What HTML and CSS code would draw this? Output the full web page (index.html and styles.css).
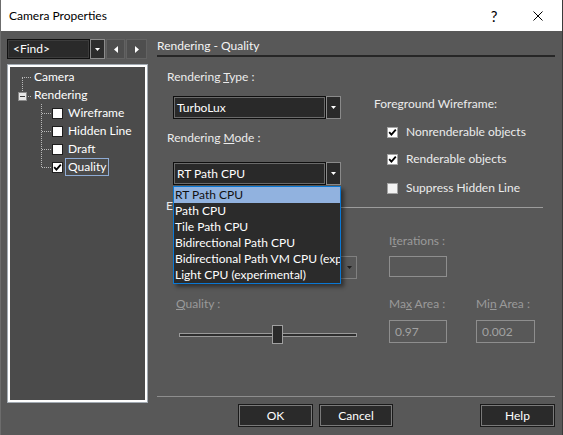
FILE: index.html
```html
<!DOCTYPE html>
<html>
<head>
<meta charset="utf-8">
<title>Camera Properties</title>
<link rel="stylesheet" href="styles.css">
</head>
<body>
<div class="window">
  <header class="titlebar">
    <span class="title">Camera Properties</span>
    <span class="title-help">?</span>
    <span class="title-close"><svg width="10" height="10" viewBox="0 0 10 10"><path d="M0.5 0.5 L9.5 9.5 M9.5 0.5 L0.5 9.5" stroke="#000" stroke-width="1"/></svg></span>
  </header>
  <div class="main">
    <aside class="side">
      <div class="findbar">
        <div class="find-combo">&lt;Find&gt;</div>
        <div class="find-drop"><svg width="5" height="3" viewBox="0 0 5 3"><path d="M0 0 H5 L2.5 3 Z" fill="#fff"/></svg></div>
        <div class="nav-btn nav-prev"><svg width="4" height="7" viewBox="0 0 4 7"><path d="M4 0 V7 L0 3.5 Z" fill="#fff"/></svg></div>
        <div class="nav-btn nav-next"><svg width="4" height="7" viewBox="0 0 4 7"><path d="M0 0 V7 L4 3.5 Z" fill="#fff"/></svg></div>
      </div>
      <div class="tree">
        <div class="tree-row"><span class="guide guide-first"></span><span class="tree-text">Camera</span></div>
        <div class="tree-row"><span class="guide guide-open"><span class="expander"></span></span><span class="tree-text">Rendering</span></div>
        <div class="tree-row"><span class="guide guide-child"></span><span class="tree-check"></span><span class="tree-text child-text">Wireframe</span></div>
        <div class="tree-row"><span class="guide guide-child"></span><span class="tree-check"></span><span class="tree-text child-text">Hidden Line</span></div>
        <div class="tree-row"><span class="guide guide-child"></span><span class="tree-check"></span><span class="tree-text child-text">Draft</span></div>
        <div class="tree-row"><span class="guide guide-last"></span><span class="tree-check"><svg width="9" height="9" viewBox="0 0 9 9"><path d="M1.2 4.2 L3.4 6.6 L7.8 1.6" fill="none" stroke="#000" stroke-width="1.8"/></svg></span><span class="tree-text tree-selected">Quality</span></div>
      </div>
    </aside>

    <section class="content">
      <h1 class="page-title">Rendering - Quality</h1>

      <div class="top">
        <div class="top-left">
          <div class="label label-type">Rendering <u>T</u>ype :</div>
          <div class="combo combo-type">
            <div class="combo-field">TurboLux</div>
            <div class="combo-btn"><svg width="5" height="3" viewBox="0 0 5 3"><path d="M0 0 H5 L2.5 3 Z" fill="#fff"/></svg></div>
          </div>
          <div class="label label-mode">Rendering <u>M</u>ode :</div>
          <div class="combo combo-mode">
            <div class="combo-field">RT Path CPU</div>
            <div class="combo-btn"><svg width="5" height="3" viewBox="0 0 5 3"><path d="M0 0 H5 L2.5 3 Z" fill="#fff"/></svg></div>
            <ul class="dropdown">
              <li class="dropdown-item is-active">RT Path CPU</li>
              <li class="dropdown-item">Path CPU</li>
              <li class="dropdown-item">Tile Path CPU</li>
              <li class="dropdown-item">Bidirectional Path CPU</li>
              <li class="dropdown-item">Bidirectional Path VM CPU (experimental)</li>
              <li class="dropdown-item">Light CPU (experimental)</li>
            </ul>
          </div>
        </div>
        <div class="top-right">
          <div class="label fg-label">Foreground Wireframe:</div>
          <label class="check-row row-1"><span class="box"><svg width="9" height="9" viewBox="0 0 9 9"><path d="M1.2 4.2 L3.4 6.6 L7.8 1.6" fill="none" stroke="#000" stroke-width="1.8"/></svg></span><span>Nonrenderable objects</span></label>
          <label class="check-row row-2"><span class="box"><svg width="9" height="9" viewBox="0 0 9 9"><path d="M1.2 4.2 L3.4 6.6 L7.8 1.6" fill="none" stroke="#000" stroke-width="1.8"/></svg></span><span>Renderable objects</span></label>
          <label class="check-row row-3"><span class="box box-empty"></span><span>Suppress Hidden Line</span></label>
        </div>
      </div>

      <div class="group-sep"><span class="group-label">E</span><span class="group-line"></span></div>

      <div class="lower">
        <div class="cell"></div>
        <div class="label disabled">I<span class="ul">t</span>erations :</div>
        <div class="cell"></div>

        <div class="combo-disabled"><svg width="5" height="3" viewBox="0 0 5 3"><path d="M0 0 H5 L2.5 3 Z" fill="#1e1e1e"/></svg></div>
        <div class="field field-iter"></div>
        <div class="cell"></div>

        <div class="label disabled lbl-row3 lbl-quality"><u>Q</u>uality :</div>
        <div class="label disabled lbl-row3">Ma<u>x</u> Area :</div>
        <div class="label disabled lbl-row3">Mi<u>n</u> Area :</div>

        <div class="slider"><span class="track track-l"></span><span class="thumb"></span><span class="track track-r"></span></div>
        <div class="field field-area">0.97</div>
        <div class="field field-area field-min">0.002</div>
      </div>

      <footer class="footer">
        <button class="btn btn-ok">OK</button>
        <button class="btn btn-cancel">Cancel</button>
        <button class="btn btn-help">Help</button>
      </footer>
    </section>
  </div>
</div>
</body>
</html>
```

FILE: styles.css
```css
* { box-sizing: border-box; }

html, body {
  margin: 0;
  padding: 0;
}

body {
  background: #585858;
  font-family: "Segoe UI", Lato, "Noto Sans", sans-serif;
  font-size: 12px;
  line-height: 16px;
  color: #ececec;
}

.window {
  width: 563px;
  height: 435px;
  display: flex;
  flex-direction: column;
  overflow: hidden;
  border-left: 1px solid #6c6c6c;
  border-right: 1px solid #3a3a3a;
}

/* title bar */
.titlebar {
  height: 31px;
  flex-shrink: 0;
  background: #ffffff;
  display: flex;
  align-items: center;
  color: #000;
}

.title {
  flex: 1;
  margin-left: 8px;
  margin-top: 1px;
}

.title-help {
  width: 14px;
  text-align: center;
  font-size: 15px;
  margin-right: 32px;
}

.title-close {
  width: 10px;
  height: 10px;
  display: flex;
  margin-right: 19px;
}

/* layout */
.main {
  flex: 1;
  display: flex;
  min-height: 0;
}

.side {
  width: 156px;
  flex-shrink: 0;
  padding: 8px 0 0 6px;
}

/* find bar */
.findbar {
  display: flex;
  height: 20px;
}

.find-combo {
  width: 83px;
  border: 1px solid #111;
  background: #2a2a2a;
  box-shadow: inset 0 0 0 1px #3c3c3c;
  color: #fff;
  padding-left: 5px;
  line-height: 18px;
}

.find-drop {
  width: 15px;
  border: 1px solid #8c8c8c;
  background: #2c2c2c;
  display: flex;
  align-items: center;
  justify-content: center;
}

.nav-btn {
  margin-left: 1px;
  background: #4e4e4e;
  border: 1px solid #626262;
  display: flex;
  align-items: center;
  justify-content: center;
}

.nav-prev { width: 19px; }
.nav-next { width: 21px; }

/* tree */
.tree {
  margin: 6px 0 0 1px;
  width: 139px;
  height: 337px;
  border: 2px solid #ffffff;
  box-shadow: 0 0 0 1px #a3abb3;
  background: #4b4b4b;
  padding-top: 1px;
}

.tree-row {
  display: flex;
  align-items: center;
  height: 18px;
}

.tree-text {
  color: #fff;
  white-space: nowrap;
}

.guide {
  align-self: stretch;
  flex-shrink: 0;
  display: block;
  --dot: #b9b9b9;
}

.guide-first {
  width: 24px;
  background:
    repeating-linear-gradient(to right, var(--dot) 0 1px, transparent 1px 2px) 12px 9px / 10px 1px no-repeat,
    repeating-linear-gradient(to bottom, var(--dot) 0 1px, transparent 1px 2px) 12px 10px / 1px 8px no-repeat;
}

.guide-open {
  width: 24px;
  padding: 6px 0 0 8px;
  background:
    repeating-linear-gradient(to bottom, var(--dot) 0 1px, transparent 1px 2px) 12px 0 / 1px 6px no-repeat,
    repeating-linear-gradient(to right, var(--dot) 0 1px, transparent 1px 2px) 18px 10px / 4px 1px no-repeat;
}

.expander {
  display: block;
  width: 9px;
  height: 9px;
  border: 1px solid #8a8a8a;
  background: linear-gradient(#3a3a3a, #3a3a3a) center / 5px 1px no-repeat, #e6e6e6;
}

.guide-child,
.guide-last {
  width: 42px;
  background:
    repeating-linear-gradient(to bottom, var(--dot) 0 1px, transparent 1px 2px) 31px 0 / 1px 18px no-repeat,
    repeating-linear-gradient(to right, var(--dot) 0 1px, transparent 1px 2px) 32px 9px / 9px 1px no-repeat;
}

.guide-last {
  background:
    repeating-linear-gradient(to bottom, var(--dot) 0 1px, transparent 1px 2px) 31px 0 / 1px 9px no-repeat,
    repeating-linear-gradient(to right, var(--dot) 0 1px, transparent 1px 2px) 32px 9px / 9px 1px no-repeat;
}

.tree-check {
  width: 11px;
  height: 11px;
  flex-shrink: 0;
  background: #fff;
  border: 1px solid #1e1e1e;
  display: flex;
  align-items: center;
  justify-content: center;
}

.child-text {
  margin-left: 5px;
}

.tree-selected {
  margin-left: 2px;
  height: 18px;
  border: 1px solid #8eabd4;
  padding: 0 2px;
  line-height: 16px;
}

/* content */
.content {
  flex: 1;
  display: flex;
  flex-direction: column;
  margin-right: 7px;
}

.page-title {
  margin: 7px 0 0;
  font-size: 12px;
  font-weight: normal;
  line-height: 16px;
  padding-bottom: 1px;
  border-bottom: 2px solid #262626;
  color: #f4f4f4;
}

.label {
  white-space: nowrap;
  color: #ececec;
}

.top {
  display: flex;
  align-items: flex-start;
}

.top-left {
  width: 217px;
  padding-left: 10px;
}

.label-type { margin-top: 12px; }
.label-mode { margin-top: 11px; }

.combo {
  display: flex;
  width: 168px;
  height: 23px;
  margin-left: 6px;
  position: relative;
}

.combo-type { margin-top: 11px; }
.combo-mode { margin-top: 16px; }

.combo-field {
  flex: 1;
  background: #292929;
  border: 1px solid #0e0e0e;
  box-shadow: inset 0 0 0 1px #6a6a6a;
  color: #fff;
  padding-left: 3px;
  line-height: 21px;
}

.combo-btn {
  width: 15px;
  background: #2a2a2a;
  border: 1px solid #8a8a8a;
  display: flex;
  align-items: center;
  justify-content: center;
}

.dropdown {
  position: absolute;
  top: 24px;
  left: 0;
  width: 168px;
  margin: 0;
  padding: 0;
  list-style: none;
  background: #2b2b2b;
  border: 1px solid #0a78d4;
  box-shadow: 3px 3px 4px rgba(0, 0, 0, 0.45);
  z-index: 5;
}

.dropdown-item {
  height: 16px;
  line-height: 16px;
  padding-left: 1px;
  color: #fff;
  white-space: nowrap;
  overflow: hidden;
}

.dropdown-item.is-active {
  background: #91b2df;
  color: #111;
}

.top-right {
  flex: 1;
}

.fg-label { margin-top: 39px; }

.check-row {
  display: flex;
  align-items: center;
  height: 16px;
  padding-left: 13px;
  color: #ececec;
  white-space: nowrap;
}

.row-1 { margin-top: 12px; }
.row-2 { margin-top: 11px; }
.row-3 { margin-top: 13px; }

.box {
  width: 11px;
  height: 11px;
  margin-right: 8px;
  background: #fff;
  border: 1px solid #a3a3a3;
  display: flex;
  align-items: center;
  justify-content: center;
}

.box-empty { background: #f3f3f3; }

/* group separator */
.group-sep {
  display: flex;
  align-items: center;
  margin-top: 2px;
  height: 16px;
  padding-left: 9px;
}

.group-label { color: #ececec; }

.group-line {
  flex: 1;
  height: 1px;
  margin: 2px 12px 0 4px;
  background: #9c9c9c;
}

/* lower grid */
.lower {
  display: grid;
  grid-template-columns: 216px 87px 1fr;
  padding-left: 16px;
  align-items: start;
}

.lower > :nth-child(-n+3) { margin-top: 19px; height: 16px; }

.disabled { color: #9a9a9a; }

.ul { text-decoration: underline; }

.combo-disabled {
  margin-top: 7px;
  width: 184px;
  height: 23px;
  border: 1px solid #808080;
  display: flex;
  align-items: center;
  justify-content: flex-end;
  padding-right: 4px;
}

.field {
  border: 1px solid #8e8e8e;
  color: #a2a2a2;
  padding-left: 5px;
}

.field-iter {
  margin-top: 7px;
  width: 58px;
  height: 21px;
}

.lbl-row3 { margin-top: 17px; }
.lbl-quality { padding-left: 3px; }

.slider {
  margin: 13px 0 0 6px;
  width: 178px;
  height: 19px;
  display: flex;
  align-items: center;
}

.track {
  height: 4px;
  background: #2e2e2e;
  border-top: 1px solid #999;
  border-bottom: 1px solid #999;
}

.track-l { width: 93px; border-left: 1px solid #999; }
.track-r { flex: 1; border-right: 1px solid #999; }

.thumb {
  width: 11px;
  height: 19px;
  background: #2b2b2b;
  border: 1px solid #a0a0a0;
}

.field-area {
  margin-top: 8px;
  width: 58px;
  height: 23px;
  line-height: 21px;
}

.field-min { width: 59px; }

/* footer */
.footer {
  margin-top: auto;
  border-top: 1px solid #8e8e8e;
  padding: 7px 0 8px 81px;
  display: flex;
}

.btn {
  height: 23px;
  width: 75px;
  background: #2a2a2a;
  border: 1px solid #1a1a1a;
  box-shadow: inset 0 0 0 1px #7a7a7a;
  color: #fff;
  font: inherit;
  padding: 0;
}

.btn-cancel { margin-left: 6px; width: 74px; }
.btn-help { margin-left: auto; }
```
